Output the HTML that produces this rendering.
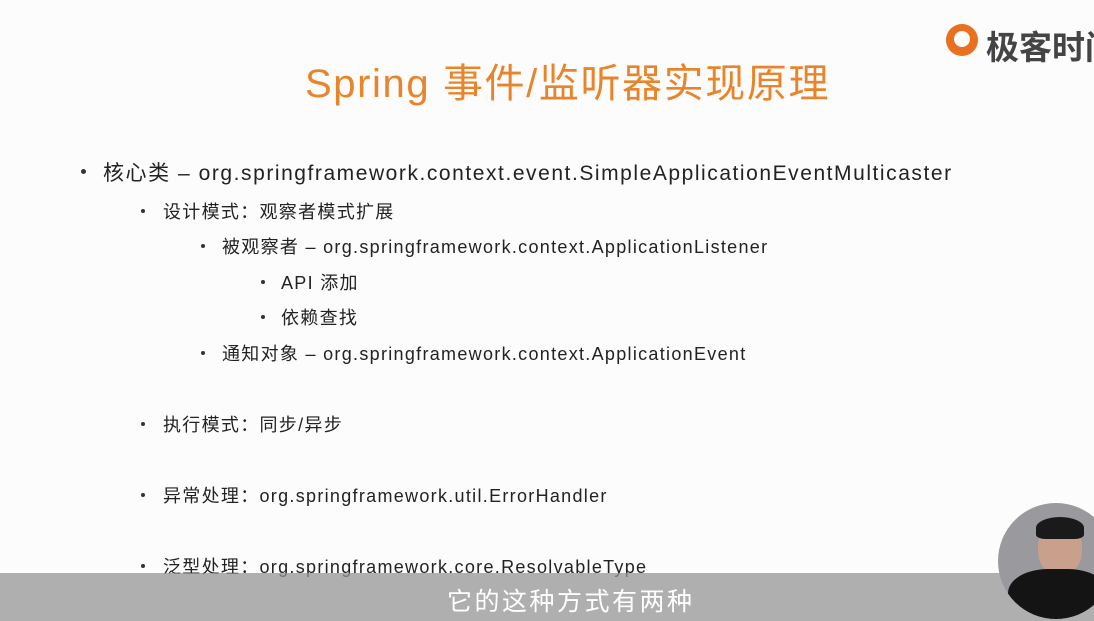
<!DOCTYPE html>
<html><head><meta charset="utf-8"><style>
body{margin:0;width:1094px;height:621px;overflow:hidden;background:#fcfcfc;font-family:"Liberation Sans","Noto Sans CJK SC",sans-serif;color:#222;position:relative}
.t{position:absolute;white-space:nowrap;letter-spacing:1.3px}
.b{position:absolute;width:5px;height:5px;border-radius:50%;background:#333}
</style></head><body>
<div class="t" style="left:305px;top:51px;font-size:40px;color:#e8852a;letter-spacing:1.6px">Spring 事件/监听器实现原理</div>
<div style="position:absolute;left:946px;top:24px;width:32px;height:32px;border-radius:50%;background:#e8701e"></div>
<div style="position:absolute;left:954px;top:31px;width:16px;height:16px;border-radius:50%;background:#fcfcfc"></div>
<div class="t" style="left:986px;top:21px;font-size:33px;color:#444;font-weight:bold;letter-spacing:0">极客时间</div>
<div class="b" style="left:81px;top:169px"></div>
<div class="t" style="left:103px;top:157px;font-size:21px;letter-spacing:1.55px">核心类 – org.springframework.context.event.SimpleApplicationEventMulticaster</div>
<div class="b" style="left:141px;top:209px;width:4px;height:4px"></div>
<div class="t" style="left:163px;top:198px;font-size:18px">设计模式：观察者模式扩展</div>
<div class="b" style="left:201px;top:244px;width:4px;height:4px"></div>
<div class="t" style="left:222px;top:233px;font-size:18px">被观察者 – org.springframework.context.ApplicationListener</div>
<div class="b" style="left:261px;top:280px;width:4px;height:4px"></div>
<div class="t" style="left:281px;top:269px;font-size:18px">API 添加</div>
<div class="b" style="left:261px;top:315px;width:4px;height:4px"></div>
<div class="t" style="left:281px;top:304px;font-size:18px">依赖查找</div>
<div class="b" style="left:201px;top:351px;width:4px;height:4px"></div>
<div class="t" style="left:222px;top:340px;font-size:18px">通知对象 – org.springframework.context.ApplicationEvent</div>
<div class="b" style="left:141px;top:422px;width:4px;height:4px"></div>
<div class="t" style="left:163px;top:411px;font-size:18px">执行模式：同步/异步</div>
<div class="b" style="left:141px;top:493px;width:4px;height:4px"></div>
<div class="t" style="left:163px;top:482px;font-size:18px">异常处理：org.springframework.util.ErrorHandler</div>
<div class="b" style="left:141px;top:564px;width:4px;height:4px"></div>
<div class="t" style="left:163px;top:553px;font-size:18px">泛型处理：org.springframework.core.ResolvableType</div>
<div style="position:absolute;left:0;top:573px;width:1094px;height:48px;background:rgba(150,150,150,0.75)"></div>
<div class="t" style="left:447px;top:582px;font-size:25px;color:#fff;letter-spacing:2.5px">它的这种方式有两种</div>
<div style="position:absolute;left:998px;top:503px;width:116px;height:116px;border-radius:50%;background:#9a9a9e;overflow:hidden">
<div style="position:absolute;left:40px;top:20px;width:44px;height:52px;border-radius:45%;background:#c9a08c"></div>
<div style="position:absolute;left:38px;top:14px;width:48px;height:22px;border-radius:50% 50% 20% 20%;background:#1a1a1a"></div>
<div style="position:absolute;left:10px;top:66px;width:100px;height:60px;border-radius:40% 40% 0 0;background:#141414"></div>
</div>
</body></html>
